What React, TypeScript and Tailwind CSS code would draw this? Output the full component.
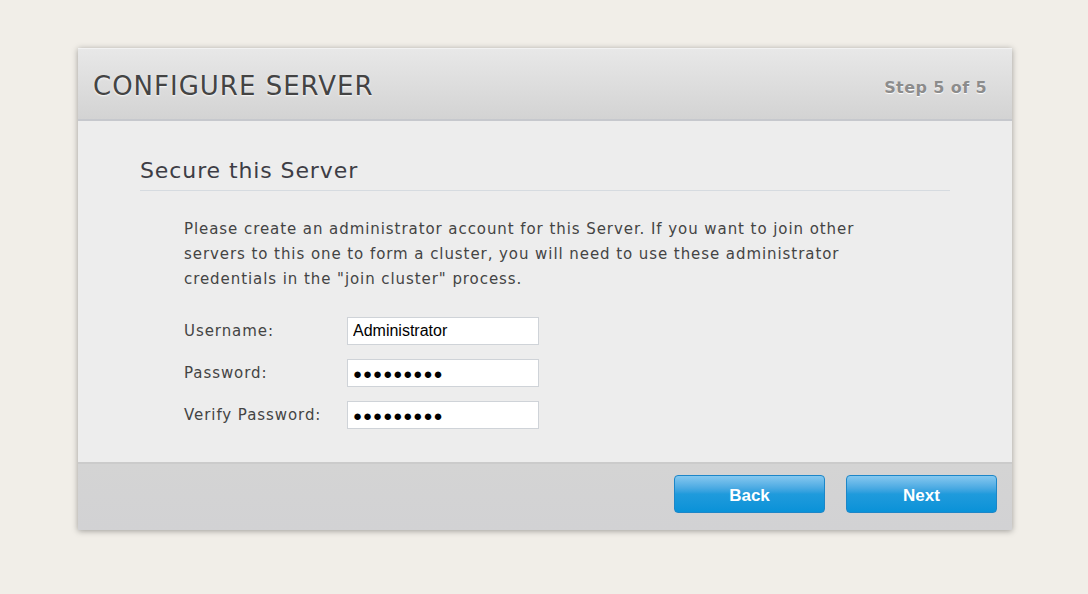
import React from "react";

const Field = ({ label, value, password }: { label: string; value: string; password?: boolean }) => (
  <div className="flex items-center h-[28px]">
    <div className="w-[163px] text-[15px] tracking-[0.93px] text-[#444]">{label}</div>
    <input
      readOnly
      type="text"
      value={value}
      className={
        "w-[192px] h-[28px] bg-white border border-[#cfd3d8] px-[5px] text-black outline-none " +
        (password ? "text-[15px] tracking-[1px]" : "text-[16px]")
      }
      style={{ fontFamily: '"Liberation Sans", Arial, sans-serif' }}
    />
  </div>
);

export default function App() {
  return (
    <div
      className="w-[1088px] h-[594px] bg-[#f1eee8] pt-[48px] pl-[78px]"
      style={{ fontFamily: '"DejaVu Sans", Verdana, sans-serif' }}
    >
      <div className="w-[934px] h-[482px] flex flex-col bg-[#ededed] shadow-[0_1px_6px_rgba(0,0,0,0.35)]">
        <div className="h-[73px] flex items-center justify-between pl-[15px] pr-[25px] pt-[4px] bg-gradient-to-b from-[#e8e8e8] to-[#d3d3d3] border-t border-t-[#f2f2f2] border-b-2 border-b-[#c6c8cd]">
          <div className="text-[26px] tracking-[1px] text-[#444] [text-shadow:0_1px_2px_rgba(255,255,255,0.9)]">CONFIGURE SERVER</div>
          <div className="text-[16px] font-bold tracking-[0.4px] text-[#8c8c8c] mt-[3px] [text-shadow:0_1px_1px_#fff]">Step 5 of 5</div>
        </div>
        <div className="flex-1 px-[62px] pt-[36px]">
          <div className="text-[22px] tracking-[0.9px] text-[#3d3d45] pb-[5px] border-b border-[#d6dbe0] leading-[28px]">Secure this Server</div>
          <div className="pl-[44px] pt-[26px]">
            <p className="text-[15px] leading-[25px] tracking-[0.93px] text-[#444] w-[700px]">
              Please create an administrator account for this Server. If you want to join other servers to this one to form a cluster, you will need to use these administrator credentials in the "join cluster" process.
            </p>
            <div className="flex flex-col gap-[14px] mt-[25px]">
              <Field label="Username:" value="Administrator" />
              <Field label="Password:" value="●●●●●●●●●" password />
              <Field label="Verify Password:" value="●●●●●●●●●" password />
            </div>
          </div>
        </div>
        <div className="h-[68px] bg-gradient-to-b from-[#d4d4d4] to-[#d2d2d4] border-t-2 border-t-[#cbcbcb] flex items-start justify-end gap-[21px] pt-[11px] pr-[15px]">
          {["Back", "Next"].map((t) => (
            <button
              key={t}
              className="w-[151px] h-[38px] pt-[3px] rounded-[4px] border border-[#1c86c8] bg-gradient-to-b from-[#85c8ef] via-[#1f9bdc] to-[#0892d8] text-white font-bold text-[17px]"
              style={{ fontFamily: '"Liberation Sans", Arial, sans-serif' }}
            >
              {t}
            </button>
          ))}
        </div>
      </div>
    </div>
  );
}
